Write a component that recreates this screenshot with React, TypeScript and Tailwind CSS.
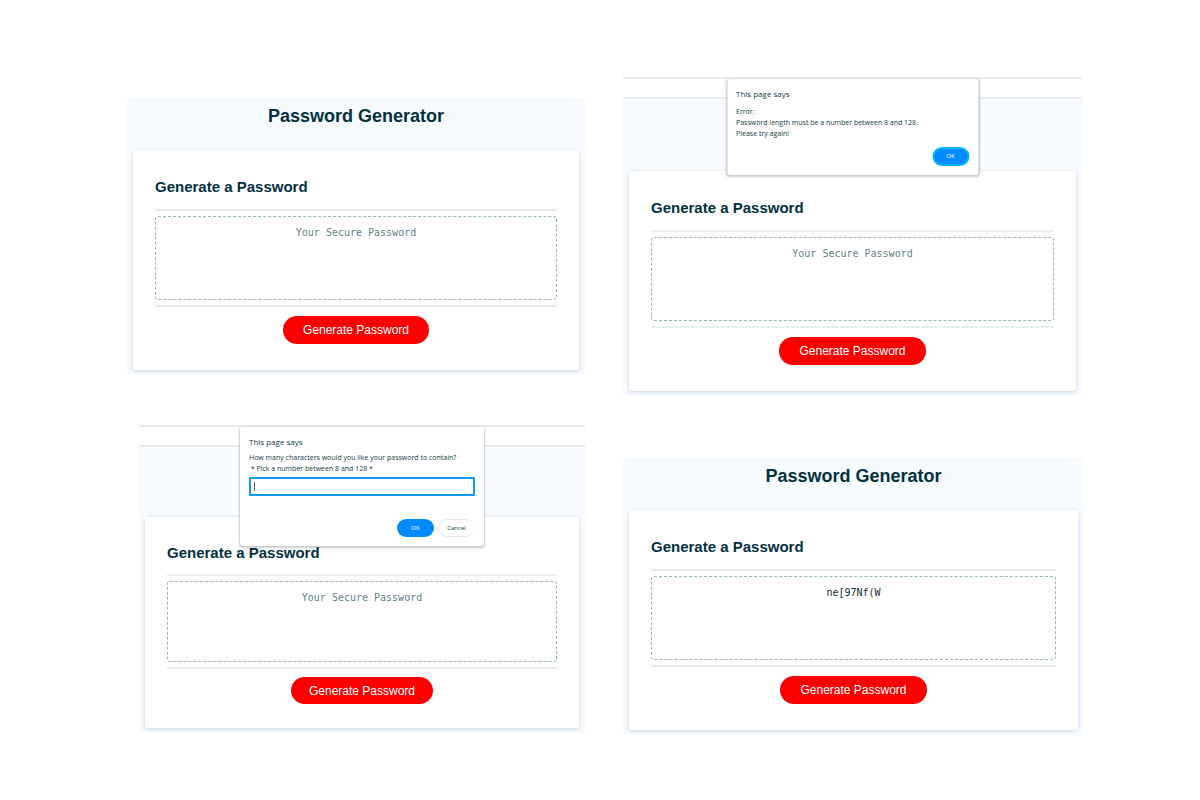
import { useId } from "react";
import type { ReactNode } from "react";
import { clsx } from "clsx";

type CardProps = { password?: string; size?: "regular" | "compact" };

function GeneratorCard({ password = "", size = "regular" }: CardProps) {
  const id = useId();
  const compact = size === "compact";
  return (
    <section className="mx-1.5 rounded-[3px] bg-white px-[22px] shadow-[0_1px_4px_rgba(20,60,70,0.2)]">
      <h2
        className={clsx(
          "text-[15px] leading-8 font-bold text-[#03303d]",
          compact ? "pt-5" : "pt-[21px]",
        )}
      >
        <label htmlFor={id}>Generate a Password</label>
      </h2>
      <div className={clsx("border-y-2 border-[#e9eeef] py-[5px]", compact ? "mt-[5px]" : "mt-1.5")}>
        <textarea
          id={id}
          readOnly
          value={password}
          placeholder="Your Secure Password"
          className={clsx(
            "block w-full resize-none overflow-hidden rounded-[3px] border border-dashed border-[#98b5bd] px-2 pt-2 text-center font-['DejaVu_Sans_Mono',monospace] text-[10px] leading-4 text-[#102c33] outline-none placeholder:text-[#607f84]",
            compact ? "h-[81px]" : "h-[84px]",
          )}
        />
      </div>
      <div className={clsx("flex justify-center", compact ? "pt-2 pb-6" : "pt-[9px] pb-[26px]")}>
        <button
          type="button"
          className={clsx(
            "rounded-full bg-[#fa0000] text-[12px] text-white",
            compact ? "h-[27px] px-[18px]" : "h-7 px-5",
          )}
        >
          Generate Password
        </button>
      </div>
    </section>
  );
}

function TitledPage({ password }: { password?: string }) {
  return (
    <article className="bg-[#f7fbff] pb-[5px]">
      <h1 className="pb-4 text-center text-[18px] leading-9 font-bold text-[#03303d]">
        Password Generator
      </h1>
      <GeneratorCard password={password} />
    </article>
  );
}

function Dialog({ wide, children }: { wide?: boolean; children: ReactNode }) {
  return (
    <div
      role="dialog"
      aria-label="This page says"
      className={clsx(
        "absolute top-0.5 left-1/2 -translate-x-1/2 rounded-[3px] bg-white px-[9px] pt-[7px] pb-[9px] font-['Open_Sans','Noto_Sans',sans-serif] text-[7px] leading-[11px] text-[#123c44] shadow-[0_1px_2px_1px_rgba(40,50,55,0.25)]",
        wide ? "w-[251px]" : "w-[244px]",
      )}
    >
      <p className={clsx("text-[8px] leading-[15px]", wide ? "pb-[5px]" : "pb-[3px]")}>
        This page says
      </p>
      {children}
    </div>
  );
}

function DialogPage({ compact, children }: { compact?: boolean; children: ReactNode }) {
  return (
    <article className="relative bg-[#f7fbff] pb-[5px]">
      <div
        className={clsx(
          "h-[22px] border-y-2 border-[#e9edee] bg-white",
          compact ? "mb-[70px]" : "mb-[72px]",
        )}
      />
      <GeneratorCard size={compact ? "compact" : "regular"} />
      {children}
    </article>
  );
}

export default function App() {
  return (
    <main className="grid min-h-screen grid-cols-[458fr_461fr] items-start gap-[38px] bg-white pr-[116px] pl-[127px] font-['Liberation_Sans',Arial,sans-serif]">
      <div className="flex flex-col gap-[50px] pt-[98px]">
        <TitledPage />
        <div className="pl-3">
          <DialogPage compact>
            <Dialog>
              <label htmlFor="length" className="block whitespace-pre">
                {"How many characters would you like your password to contain?\n * Pick a number between 8 and 128 *"}
              </label>
              <div className="relative mt-[3px]">
                <input
                  id="length"
                  type="text"
                  className="block h-[19px] w-full rounded-[1px] border-2 border-[#0a9bfa] px-1 outline-none"
                />
                <span className="absolute top-[5px] left-[5px] h-[9px] w-px bg-[#56656a]" />
              </div>
              <div className="flex justify-end gap-1 pt-[23px]">
                <button type="button" className="h-[18px] w-[37px] rounded-full bg-[#008cff] text-[6px] font-medium text-white">
                  OK
                </button>
                <button type="button" className="h-[18px] w-[37px] rounded-full border border-[#e6eaec] text-[6px] font-medium">
                  Cancel
                </button>
              </div>
            </Dialog>
          </DialogPage>
        </div>
      </div>
      <div className="flex flex-col gap-[62px] pt-[77px]">
        <div className="pr-0.5">
          <DialogPage>
            <Dialog wide>
              <p>Error:</p>
              <p>Password length must be a number between 8 and 128.</p>
              <p>Please try again!</p>
              <div className="flex justify-end pt-2">
                <button
                  type="button"
                  className="h-[19px] w-[37px] rounded-full border-2 border-[#00b4ff] bg-[#008cff] text-[6px] font-medium text-white"
                >
                  OK
                </button>
              </div>
            </Dialog>
          </DialogPage>
        </div>
        <TitledPage password="ne[97Nf(W" />
      </div>
    </main>
  );
}
